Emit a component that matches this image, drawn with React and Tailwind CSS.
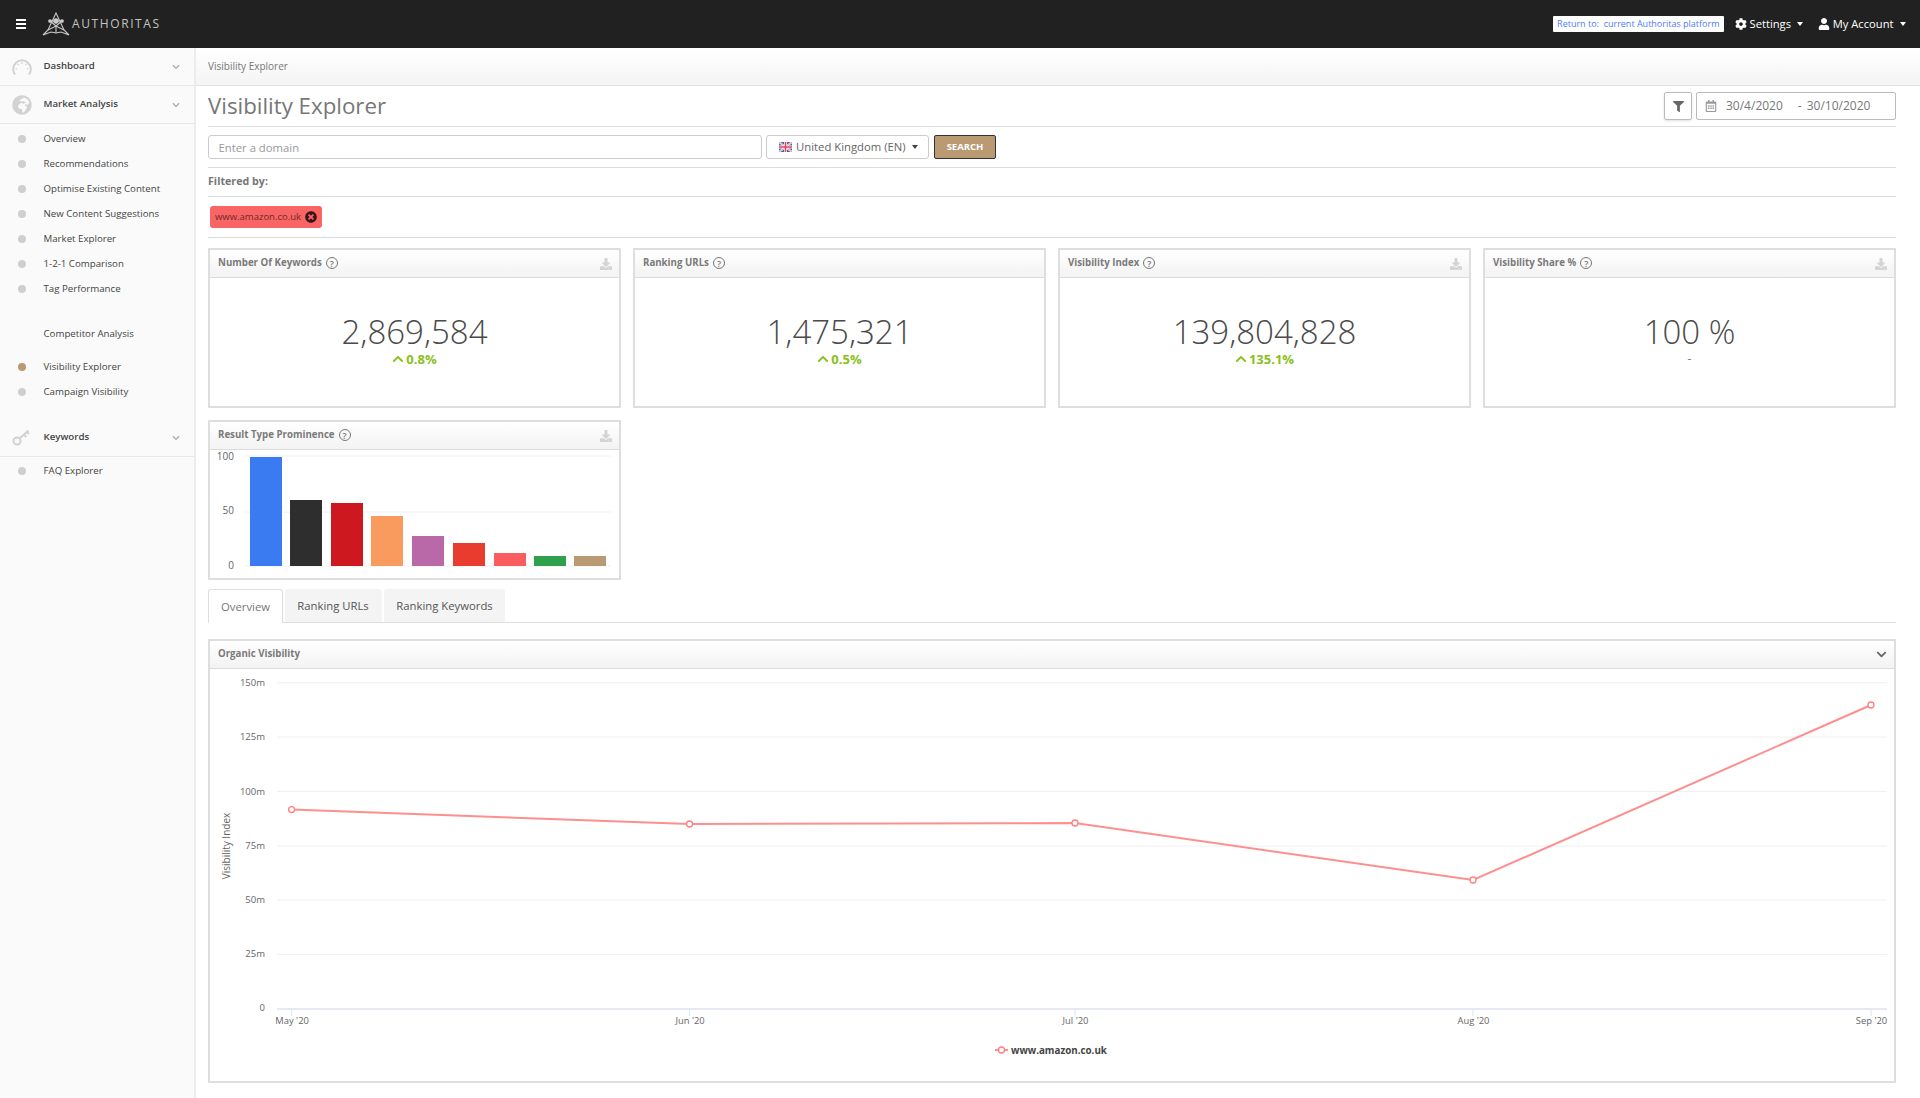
import { FaCog, FaUser, FaFilter, FaRegCalendarAlt, FaDownload, FaChevronDown, FaChevronUp, FaTimesCircle, FaGlobeAfrica } from "react-icons/fa";

const font = { fontFamily: '"Open Sans", sans-serif' };

const subItems = [
  "Overview",
  "Recommendations",
  "Optimise Existing Content",
  "New Content Suggestions",
  "Market Explorer",
  "1-2-1 Comparison",
  "Tag Performance",
];

const stats = [
  { title: "Number Of Keywords", value: "2,869,584", change: "0.8%", download: true },
  { title: "Ranking URLs", value: "1,475,321", change: "0.5%", download: false },
  { title: "Visibility Index", value: "139,804,828", change: "135.1%", download: true },
  { title: "Visibility Share %", value: "100 %", change: null, download: true },
];

const bars = [
  { x: 250, top: 457, color: "#3a7bf2" },
  { x: 290, top: 500, color: "#2e2e2e" },
  { x: 331, top: 503, color: "#cc181e" },
  { x: 371, top: 516, color: "#f99b5e" },
  { x: 412, top: 536, color: "#b968a8" },
  { x: 453, top: 543, color: "#e83c2e" },
  { x: 494, top: 553, color: "#fb5c5f" },
  { x: 534, top: 556, color: "#2fa04e" },
  { x: 574, top: 556, color: "#b99a72" },
];

const points = [
  { x: 291.6, y: 809.6, label: "May '20" },
  { x: 689.6, y: 824, label: "Jun '20" },
  { x: 1075, y: 823, label: "Jul '20" },
  { x: 1473, y: 880, label: "Aug '20" },
  { x: 1871, y: 705, label: "Sep '20" },
];

const yTicks = [
  { y: 682.7, label: "150m" },
  { y: 737, label: "125m" },
  { y: 791.5, label: "100m" },
  { y: 846, label: "75m" },
  { y: 900, label: "50m" },
  { y: 954.4, label: "25m" },
];

function GaugeIcon() {
  return (
    <svg width="20" height="16" viewBox="0 0 20 16" fill="none" stroke="#d2d2d2">
      <path d="M3 15.5 A8.8 8.8 0 1 1 17 15.5" strokeWidth="2" />
      <path d="M10 3v2M5.5 5l1 1.2M14.5 5l-1 1.2M3.5 9.5l1.5.3M16.5 9.5l-1.5.3" strokeWidth="1.2" />
    </svg>
  );
}

function KeyIcon() {
  return (
    <svg width="18" height="17" viewBox="0 0 18 17" fill="none" stroke="#d2d2d2" strokeWidth="2">
      <circle cx="5" cy="12" r="3.5" />
      <path d="M7.6 9.6L16.5 1.5M12 5.6l2.2 2.4M15 3l1.8 2" />
    </svg>
  );
}

function Logo() {
  return (
    <svg width="28" height="24" viewBox="0 0 28 24" fill="none" stroke="#c9c9c9" strokeWidth="1.1">
      <path d="M14 1 L6 18 L1 23 L9 20 L14 21 L19 20 L27 23 L22 18 Z" />
      <path d="M6 18 L14 14 L22 18 M14 21 V14 M8 9 L20 9 M8 9 L14 14 L20 9" />
      <circle cx="14" cy="9" r="2.2" fill="#c9c9c9" />
      <circle cx="8" cy="9" r="1.3" fill="#c9c9c9" />
      <circle cx="20" cy="9" r="1.3" fill="#c9c9c9" />
    </svg>
  );
}

function UkFlag() {
  return (
    <svg width="13" height="10" viewBox="0 0 13 10">
      <rect width="13" height="10" fill="#4a5fa8" />
      <path d="M0 0L13 10M13 0L0 10" stroke="#fff" strokeWidth="1.8" />
      <path d="M0 0L13 10M13 0L0 10" stroke="#d8455a" strokeWidth="0.6" />
      <path d="M6.5 0V10M0 5H13" stroke="#fff" strokeWidth="3" />
      <path d="M6.5 0V10M0 5H13" stroke="#d8455a" strokeWidth="1.6" />
    </svg>
  );
}

function Caret({ color = "border-t-white" }) {
  return <span className={`inline-block w-0 h-0 border-x-[3.5px] border-x-transparent border-t-[4px] ${color}`} />;
}

function HelpMark() {
  return (
    <span className="inline-flex items-center justify-center w-[12px] h-[12px] rounded-full border border-[#777] text-[9px] leading-none text-[#777] font-semibold">
      ?
    </span>
  );
}

function SideHeader({ icon, label, border = true }) {
  return (
    <div className={`flex items-center h-[38px] pl-[12px] pr-[14px] ${border ? "border-b border-[#e8e8e8]" : ""}`}>
      <span className="w-[31.5px] flex justify-start">{icon}</span>
      <span className="text-[9.7px] font-semibold text-[#444] flex-1">{label}</span>
      <FaChevronDown className="text-[#aaa] text-[8px]" />
    </div>
  );
}

function SideItem({ label, active }) {
  return (
    <div className="flex items-center h-[25px] pl-[18px]">
      <span className={`w-[8px] h-[8px] mb-[1px] rounded-full ${active ? "bg-[#b99a72]" : "bg-[#cfcfcf]"}`} />
      <span className="ml-[17.5px] text-[9.7px] text-[#444]">{label}</span>
    </div>
  );
}

function Sidebar() {
  return (
    <aside className="w-[196px] shrink-0 bg-[#fafafa] border-r-2 border-[#ececec]">
      <SideHeader icon={<GaugeIcon />} label="Dashboard" />
      <SideHeader icon={<FaGlobeAfrica className="text-[#d2d2d2] text-[20px]" />} label="Market Analysis" />
      <div className="pt-[3px]">
        {subItems.map((s) => (
          <SideItem key={s} label={s} />
        ))}
      </div>
      <div className="h-[25px] mt-[20px] pl-[43.5px] flex items-center text-[9.7px] font-medium text-[#444]">Competitor Analysis</div>
      <div className="mt-[8px]">
        <SideItem label="Visibility Explorer" active />
        <SideItem label="Campaign Visibility" />
      </div>
      <div className="mt-[14px]">
        <SideHeader icon={<KeyIcon />} label="Keywords" />
      </div>
      <div className="pt-[2px]">
        <SideItem label="FAQ Explorer" />
      </div>
    </aside>
  );
}

function PanelHeader({ title, help = true, right }) {
  return (
    <div className="flex items-center justify-between h-[28px] pl-[8px] pr-[7px] bg-gradient-to-b from-white to-[#f3f3f3] border-b border-[#dcdcdc]">
      <div className="flex items-center gap-[4px]">
        <span className="text-[9.7px] font-bold text-[#7a7a7a]">{title}</span>
        {help && <HelpMark />}
      </div>
      {right}
    </div>
  );
}

const downloadIcon = <FaDownload className="text-[#d4d4d4] text-[12px]" />;

function StatCard({ title, value, change, download }) {
  return (
    <div className="h-[160px] border-2 border-[#dedede] bg-white">
      <PanelHeader title={title} right={download ? downloadIcon : null} />
      <div className="flex flex-col items-center pt-[34px]">
        <div className="text-[33px] font-light leading-[40px] text-[#4a4a4a]">{value}</div>
        {change ? (
          <div className="flex items-center gap-[2px] text-[13px] font-bold leading-[14px] text-[#8ac01c]">
            <FaChevronUp className="text-[12px]" />
            {change}
          </div>
        ) : (
          <div className="text-[12px] leading-[14px] text-[#777]">-</div>
        )}
      </div>
    </div>
  );
}

function BarChart() {
  return (
    <svg width="409" height="128" viewBox="210 450 409 128" className="block" style={font}>
      {[456, 512, 566].map((y) => (
        <line key={y} x1="245" x2="611" y1={y} y2={y} stroke="#f0f0f0" />
      ))}
      {[
        { y: 460, t: "100" },
        { y: 514, t: "50" },
        { y: 569, t: "0" },
      ].map((l) => (
        <text key={l.t} x="234" y={l.y} textAnchor="end" fontSize="10" fill="#666">
          {l.t}
        </text>
      ))}
      {bars.map((b) => (
        <rect key={b.x} x={b.x} y={b.top} width="32" height={566 - b.top} fill={b.color} />
      ))}
    </svg>
  );
}

function LineChart() {
  const line = points.map((p) => `${p.x},${p.y}`).join(" ");
  return (
    <svg width="1684" height="412" viewBox="210 669 1684 412" className="block" style={font}>
      {yTicks.map((t) => (
        <g key={t.label}>
          <line x1="277" x2="1887" y1={t.y} y2={t.y} stroke="#f0f0f0" />
          <text x="265" y={t.y + 3} textAnchor="end" fontSize="9.5" fill="#666">
            {t.label}
          </text>
        </g>
      ))}
      <line x1="277" x2="1887" y1="1009" y2="1009" stroke="#e6e9f5" strokeWidth="2" />
      <text x="265" y="1011" textAnchor="end" fontSize="9.5" fill="#666">
        0
      </text>
      <text transform="translate(230 846) rotate(-90)" textAnchor="middle" fontSize="10" fill="#666">
        Visibility Index
      </text>
      {points.map((p) => (
        <g key={p.label}>
          <line x1={p.x} x2={p.x} y1="1009" y2="1016" stroke="#dde3f0" />
          <text x={p.x + 0.5} y="1024" textAnchor="middle" fontSize="9.4" fill="#666">
            {p.label}
          </text>
        </g>
      ))}
      <polyline points={line} fill="none" stroke="#ff8f8f" strokeWidth="2" />
      {points.map((p) => (
        <circle key={p.x} cx={p.x} cy={p.y} r="3" fill="#fff" stroke="#ff7f7f" strokeWidth="1.3" />
      ))}
      <line x1="995" x2="1008" y1="1050" y2="1050" stroke="#ff8f8f" strokeWidth="2" />
      <circle cx="1001.5" cy="1050" r="3" fill="#fff" stroke="#ff7f7f" strokeWidth="1.3" />
      <text x="1011" y="1054" fontSize="9.8" fontWeight="700" fill="#444">
        www.amazon.co.uk
      </text>
    </svg>
  );
}

export default function App() {
  return (
    <div className="flex flex-col w-[1920px] h-[1098px] overflow-hidden bg-white" style={font}>
      {/* Top bar */}
      <header className="flex items-center h-[48px] shrink-0 bg-[#212121] pl-[16px] pr-[14.5px]">
        <span className="flex flex-col gap-[2px] w-[10px]">
          <span className="h-[2px] bg-white" />
          <span className="h-[2px] bg-white" />
          <span className="h-[2px] bg-white" />
        </span>
        <span className="ml-[16px]">
          <Logo />
        </span>
        <span className="ml-[2px] text-[12px] tracking-[1.6px] text-[#c4c4c4]">AUTHORITAS</span>
        <div className="ml-auto flex items-center">
          <span className="flex items-center h-[16px] px-[4px] bg-white rounded-[1px] text-[9px] text-[#4f7df5] whitespace-pre">Return to:  current Authoritas platform</span>
          <span className="flex items-center ml-[11px] text-[11.2px] text-white">
            <FaCog className="text-[12px] mr-[3px]" />
            Settings
            <span className="ml-[6px] flex"><Caret /></span>
          </span>
          <span className="flex items-center ml-[14.7px] text-[11.2px] text-white">
            <FaUser className="text-[12px] mr-[3px]" />
            My Account
            <span className="ml-[6px] flex"><Caret /></span>
          </span>
        </div>
      </header>

      <div className="flex flex-1 min-h-0">
        <Sidebar />

        <main className="flex-1 min-w-0">
          {/* Breadcrumb */}
          <div className="flex items-center h-[38px] pl-[12px] bg-gradient-to-b from-white to-[#f4f4f4] border-b border-[#e2e2e2] text-[10px] text-[#777]">
            Visibility Explorer
          </div>

          <div className="pl-[12px] pr-[24px]">
            {/* Title */}
            <div className="flex items-center justify-between h-[41px] border-b border-[#dcdcdc]">
              <h1 className="text-[22.3px] text-[#777] leading-none">Visibility Explorer</h1>
              <div className="flex items-center gap-[4px]">
                <button className="flex items-center justify-center w-[28px] h-[28px] border border-[#bbb] rounded-[2px] shadow-sm text-[#666]">
                  <FaFilter className="text-[11px]" />
                </button>
                <div className="flex items-center w-[200px] h-[28px] border border-[#bbb] rounded-[2px] pl-[8px] text-[12px] text-[#777]">
                  <FaRegCalendarAlt className="text-[12px] text-[#999] mr-[9px]" />
                  <span>30/4/2020</span>
                  <span className="ml-[15px]">-</span>
                  <span className="ml-[5px]">30/10/2020</span>
                </div>
              </div>
            </div>

            {/* Search */}
            <div className="flex items-center gap-[4px] h-[41px] border-b border-[#dcdcdc]">
              <input
                placeholder="Enter a domain"
                className="w-[554px] h-[24px] px-[9.5px] border border-[#ccc] rounded-[3px] text-[11.3px] text-[#777] placeholder:text-[#999] outline-none"
              />
              <div className="flex items-center gap-[4px] w-[163px] h-[24px] pl-[12px] border border-[#ccc] rounded-[3px] text-[11.3px] text-[#666]">
                <UkFlag />
                United Kingdom (EN)
                <span className="ml-[2px] flex"><Caret color="border-t-[#444]" /></span>
              </div>
              <button className="w-[62px] h-[24px] ml-[1px] bg-[#b99a72] border border-[#333] rounded-[2px] text-[9.5px] font-bold text-white">
                SEARCH
              </button>
            </div>

            {/* Filters */}
            <div className="flex items-center h-[29px] pb-[1px] border-b border-[#dcdcdc] text-[10.7px] font-bold text-[#777]">Filtered by:</div>
            <div className="h-[41px] pt-[9px] pl-[2px] border-b border-[#dcdcdc]">
              <div className="flex items-center w-[112px] h-[22px] pl-[5px] bg-[#f96565] rounded-[3px] text-[9.5px] text-[#6e2a2a]">
                www.amazon.co.uk
                <FaTimesCircle className="ml-[4px] text-[12px] text-[#3a1518]" />
              </div>
            </div>

            {/* Stats */}
            <div className="grid grid-cols-4 gap-[12px] mt-[10px]">
              {stats.map((s) => (
                <StatCard key={s.title} {...s} />
              ))}
            </div>

            <div className="w-[413px] h-[160px] mt-[12px] border-2 border-[#dedede] bg-white">
              <PanelHeader title="Result Type Prominence" right={downloadIcon} />
              <BarChart />
            </div>

            {/* Tabs */}
            <div className="flex items-end gap-[2px] h-[34px] mt-[9px] border-b border-[#dedede] text-[11.3px]">
              <div className="flex items-center justify-center w-[75px] h-[34px] pt-[1px] -mb-px bg-white border border-b-0 border-[#dedede] rounded-t-[3px] text-[#777]">Overview</div>
              <div className="flex items-center justify-center w-[97px] h-[33px] pt-[1px] pr-[1px] bg-[#f4f4f4] rounded-t-[3px] text-[#555]">Ranking URLs</div>
              <div className="flex items-center justify-center w-[121px] h-[33px] pt-[1px] bg-[#f4f4f4] rounded-t-[3px] text-[#555]">Ranking Keywords</div>
            </div>

            {/* Organic visibility */}
            <div className="h-[444px] mt-[16px] border-2 border-[#dedede] bg-white">
              <PanelHeader title="Organic Visibility" help={false} right={<FaChevronDown className="text-[#666] text-[11px]" />} />
              <LineChart />
            </div>
          </div>
        </main>
      </div>
    </div>
  );
}
